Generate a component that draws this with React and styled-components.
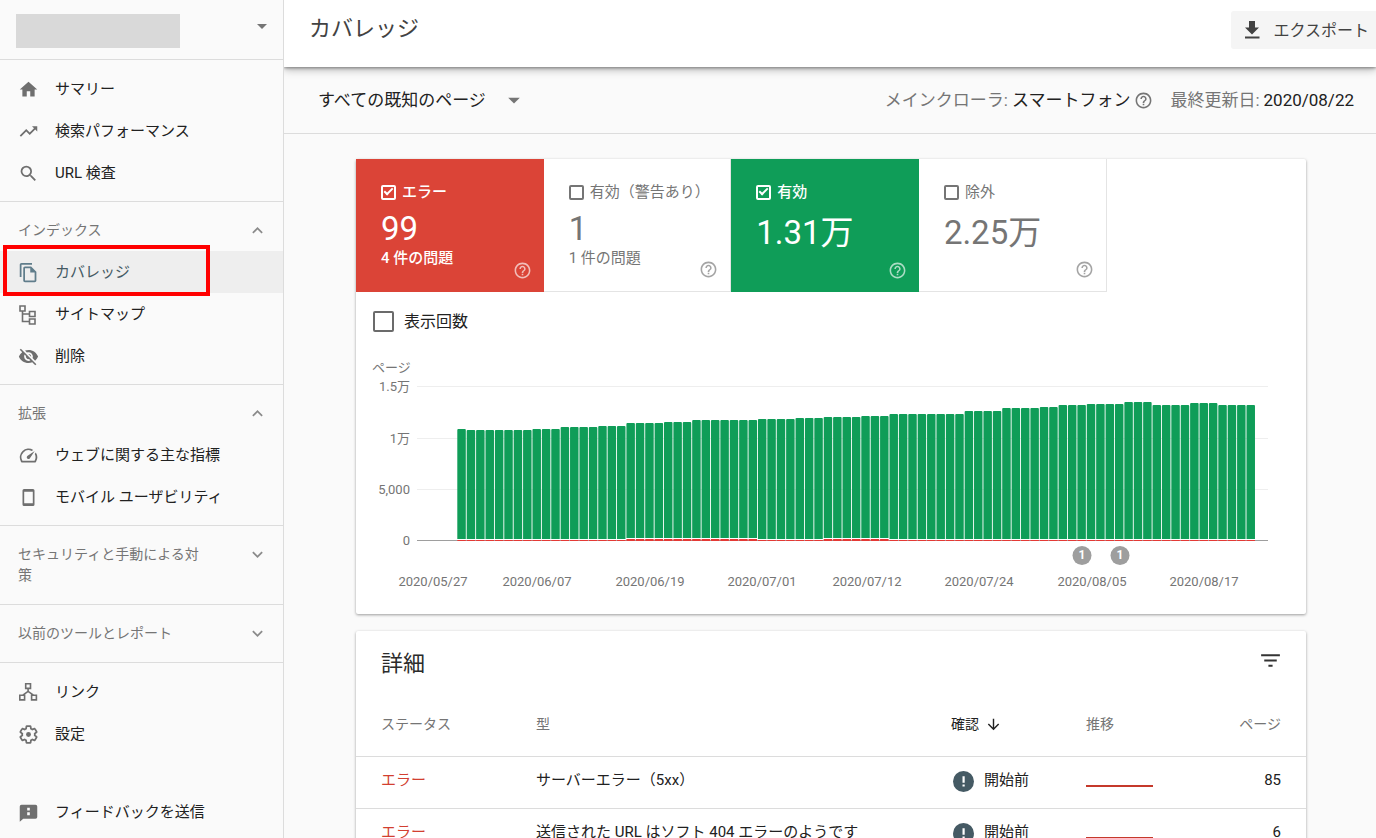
import React from 'react';
import styled, { createGlobalStyle } from 'styled-components';
import {
  MdHome,
  MdTrendingUp,
  MdSearch,
  MdOutlineFileCopy,
  MdVisibilityOff,
  MdOutlineSpeed,
  MdExpandLess,
  MdExpandMore,
  MdArrowDropDown,
  MdHelpOutline,
  MdFilterList,
  MdArrowDownward,
} from 'react-icons/md';

const GlobalStyle = createGlobalStyle`
  *, *::before, *::after { box-sizing: border-box; }
  body {
    margin: 0;
    background: #fafafa;
    color: #212121;
    font-family: Roboto, "Noto Sans CJK JP", sans-serif;
    font-size: 15px;
    line-height: 21px;
  }
  button, select, input { font: inherit; color: inherit; margin: 0; }
  svg { display: block; flex: none; }
`;

const line = '#dcdcdc';
const muted = '#757575';
const red = '#db4437';
const green = '#0f9d58';

/* ---------- shell ---------- */

const Shell = styled.div`
  display: flex;
  height: 100vh;
  overflow: hidden;
`;

const Sidebar = styled.aside`
  position: relative;
  z-index: 2;
  flex: none;
  width: 284px;
  background: #fafafa;
  border-right: 1px solid ${line};
  overflow-y: auto;
  scrollbar-width: none;
`;

const Main = styled.main`
  flex: 1;
  min-width: 0;
  display: flex;
  flex-direction: column;
`;

/* ---------- sidebar ---------- */

const PropertyPicker = styled.button`
  display: flex;
  align-items: flex-start;
  justify-content: space-between;
  width: 100%;
  height: 60px;
  padding: 14px 9px 0 16px;
  border: 0;
  border-bottom: 1px solid ${line};
  background: none;
  color: ${muted};
`;

const PropertyName = styled.span`
  width: 164px;
  height: 34px;
  background: #d9d9d9;
`;

const NavGroup = styled.section`
  padding-bottom: 7px;
  border-bottom: ${(p) => (p.$last ? '0' : `1px solid ${line}`)};
`;

const NavList = styled.ul`
  margin: 0;
  padding: ${(p) => (p.$top ? '8px 0 0' : '0')};
  list-style: none;
`;

const NavItem = styled.li`
  position: relative;
`;

const NavLink = styled.a`
  display: flex;
  align-items: center;
  gap: 16px;
  height: 42px;
  padding-left: 18px;
  color: ${(p) => (p.$active ? '#455a64' : '#212121')};
  background: ${(p) => (p.$active ? '#eeeeee' : 'transparent')};
  text-decoration: none;

  svg {
    color: ${(p) => (p.$active ? '#607d8b' : '#6f6f6f')};
  }
`;

const Callout = styled.span`
  position: absolute;
  z-index: 2;
  top: -6px;
  left: 3px;
  width: 207px;
  height: 51px;
  border: 4px solid #ff0000;
  pointer-events: none;
`;

const GroupToggle = styled.button`
  display: flex;
  justify-content: space-between;
  align-items: flex-start;
  width: 100%;
  padding: 18px 15px ${(p) => (p.$open ? '10px' : '18px')} 18px;
  border: 0;
  border-bottom: ${(p) => (p.$open ? '0' : `1px solid ${line}`)};
  background: none;
  color: ${muted};
  font-size: 14px;
  line-height: 21px;
  text-align: left;

  span {
    max-width: 184px;
  }

  svg {
    color: #8a8a8a;
  }
`;

const Feedback = styled.div`
  padding-top: 36px;
`;

/* ---------- header ---------- */

const TopBar = styled.header`
  position: relative;
  z-index: 1;
  flex: none;
  display: flex;
  justify-content: space-between;
  align-items: flex-start;
  height: 67px;
  padding: 11px 0 0 25px;
  background: #ffffff;
  box-shadow: 0 1px 3px rgba(0, 0, 0, 0.4), 0 3px 8px rgba(0, 0, 0, 0.25);
`;

const Title = styled.h1`
  margin: 0;
  font-size: 22px;
  font-weight: 400;
  line-height: 36px;
  color: #424242;
`;

const ExportButton = styled.button`
  display: flex;
  align-items: center;
  gap: 10px;
  height: 38px;
  padding: 0 7px 0 10px;
  border: 0;
  border-radius: 3px 0 0 3px;
  background: #f5f5f5;
  color: #424242;
  font-size: 16px;
  white-space: nowrap;
`;

const FilterBar = styled.div`
  flex: none;
  display: flex;
  justify-content: space-between;
  align-items: center;
  height: 67px;
  padding: 0 22px 0 34px;
  border-bottom: 1px solid ${line};
  font-size: 17px;
`;

const PageFilter = styled.label`
  display: grid;
  align-items: center;
  color: ${muted};

  select, svg {
    grid-area: 1 / 1;
  }

  svg {
    justify-self: end;
    pointer-events: none;
  }
`;

const PageSelect = styled.select`
  appearance: none;
  padding: 0 40px 0 0;
  border: 0;
  background: none;
  color: #212121;
  line-height: 24px;
`;

const Meta = styled.div`
  display: flex;
  align-items: center;
  gap: 17px;
`;

const MetaItem = styled.span`
  display: flex;
  align-items: center;
  gap: 4px;
  color: ${muted};
  white-space: nowrap;

  b {
    font-weight: 400;
    color: #212121;
  }
`;

const IconButton = styled.button`
  display: flex;
  padding: 0;
  border: 0;
  background: none;
  color: ${(p) => p.$color || muted};
`;

/* ---------- content ---------- */

const Content = styled.div`
  flex: 1;
  min-height: 0;
  display: flex;
  flex-direction: column;
  gap: 17px;
  padding: 25px 70px 0 72px;
  overflow-y: auto;
  scrollbar-width: none;
`;

const Card = styled.section`
  flex: none;
  background: #ffffff;
  border-radius: 2px;
  box-shadow: 0 1px 3px rgba(0, 0, 0, 0.38);
`;

const Scores = styled.div`
  display: grid;
  grid-template-columns: repeat(4, 1fr);
  width: 79%;
`;

const Score = styled.div`
  display: flex;
  flex-direction: column;
  position: relative;
  height: 133px;
  padding: 22px 0 0 25px;
  background: ${(p) => p.$fill || '#ffffff'};
  color: ${(p) => (p.$fill ? '#ffffff' : muted)};
  font-weight: ${(p) => (p.$fill ? 500 : 400)};
  border: solid #e4e4e4;
  border-width: ${(p) => (p.$fill ? '0' : '0 1px 1px 0')};
`;

const ScoreLabel = styled.label`
  display: flex;
  align-items: center;
  gap: 6px;
  line-height: 22px;
  white-space: nowrap;
`;

const ScoreCheck = styled.input`
  appearance: none;
  flex: none;
  display: grid;
  place-items: center;
  width: 15px;
  height: 15px;
  border: 2px solid currentColor;
  border-radius: 2px;

  &:checked::after {
    content: "";
    width: 5px;
    height: 9px;
    margin-top: -3px;
    border: solid currentColor;
    border-width: 0 2px 2px 0;
    transform: rotate(45deg);
  }
`;

const ScoreValue = styled.div`
  margin-top: 8px;
  font-size: 33px;
  font-weight: 400;
  line-height: ${(p) => (p.$tall ? '44px' : '36px')};
`;

const ScoreNote = styled.div`
  line-height: 22px;
`;

const ScoreHelp = styled.button`
  position: absolute;
  right: 12px;
  bottom: 12px;
  padding: 0;
  border: 0;
  background: none;
  opacity: 0.65;
`;

const Impressions = styled.label`
  display: flex;
  align-items: center;
  gap: 10px;
  padding: 19px 0 18px 17px;
  font-size: 16px;
`;

const BigCheck = styled.input`
  appearance: none;
  width: 21px;
  height: 21px;
  border: 2px solid #6b6b6b;
  border-radius: 2px;
`;

const Chart = styled.svg`
  width: 100%;
  height: auto;
  font-size: 13px;
  fill: ${muted};
`;

/* ---------- details ---------- */

const DetailsHead = styled.div`
  display: flex;
  justify-content: space-between;
  align-items: flex-start;
  padding: 17px 23px 13px 25px;

  h2 {
    margin: 0;
    font-size: 22px;
    font-weight: 400;
    line-height: 32px;
    color: #2b2b2b;
  }
`;

const Table = styled.table`
  width: 100%;
  table-layout: fixed;
  border-collapse: collapse;

  th, td {
    padding: 0;
    text-align: left;
    vertical-align: top;
    font-weight: 400;
    white-space: nowrap;
  }

  th:first-child, td:first-child { padding-left: 25px; }
  th:last-child, td:last-child { padding-right: 25px; text-align: right; }
`;

const HeadCell = styled.th`
  width: ${(p) => p.$width || 'auto'};
  height: 63px;
  font-size: 14px;
  line-height: 63px;
  color: ${(p) => (p.$sorted ? '#212121' : muted)};
`;

const Sort = styled.span`
  display: flex;
  align-items: center;
  gap: 6px;
`;

const Row = styled.tr`
  height: 52px;
  border-top: 1px solid ${line};
`;

const Cell = styled.td`
  height: 52px;
  line-height: 46px;
  color: ${(p) => (p.$error ? '#d23f31' : '#212121')};
`;

const State = styled.span`
  display: flex;
  align-items: center;
  gap: 8px;
`;

const Trend = styled.svg`
  margin-top: 28px;
`;

/* ---------- icons ---------- */

const SitemapIcon = () => (
  <svg width="21" height="21" viewBox="0 0 21 21" fill="none" stroke="currentColor" strokeWidth="1.6" aria-hidden="true">
    <path d="M2 2h5v5H2zM11.5 7.5h5.5v5h-5.5zM11.5 15h5.5v5h-5.5zM4.5 7v10.500h7M4.500 10h7" />
  </svg>
);

const PhoneIcon = () => (
  <svg width="21" height="21" viewBox="0 0 21 21" aria-hidden="true">
    <path fill="currentColor" fillRule="evenodd" d="M6 2h9a1.500 1.500 0 0 1 1.500 1.500v14a1.500 1.500 0 0 1-1.500 1.500H6a1.500 1.500 0 0 1-1.500-1.500v-14A1.500 1.500 0 0 1 6 2zm.2 2.700v11.600h8.600V4.700z" />
  </svg>
);

const LinksIcon = () => (
  <svg width="21" height="21" viewBox="0 0 21 21" fill="none" stroke="currentColor" strokeWidth="1.6" aria-hidden="true">
    <path d="M7.700 1.800h4.800v4.600H7.700zM1.800 13.300h4.800v4.600H1.800zM13.600 13.300h4.800v4.600h-4.800zM10.100 6.400v3L4.500 13.300M10.100 9.400l5.700 3.900" />
  </svg>
);

const GearIcon = () => (
  <svg width="21" height="21" viewBox="0 0 24 24" aria-hidden="true">
    <path
      fill="none"
      stroke="currentColor"
      strokeWidth="2"
      d="M19.140 12.940c.04-.3.06-.61.06-.94c0-.32-.02-.64-.07-.94l2.030-1.580c.18-.14.23-.41.12-.61l-1.920-3.320c-.12-.22-.37-.29-.59-.22l-2.390.96c-.5-.38-1.030-.7-1.620-.94L14.400 2.810c-.04-.24-.24-.41-.48-.41h-3.840c-.24 0-.43.17-.47.41L9.250 5.350C8.660 5.590 8.120 5.920 7.630 6.290L5.240 5.330c-.22-.08-.47 0-.59.22L2.740 8.870C2.620 9.080 2.660 9.340 2.860 9.480l2.030 1.580C4.840 11.360 4.800 11.690 4.800 12s.02.64.07.94l-2.030 1.580c-.18.14-.23.41-.12.61l1.920 3.320c.12.22.37.29.59.22l2.390-.96c.5.38 1.030.7 1.620.94l.36 2.540c.05.24.24.41.48.41h3.840c.24 0 .44-.17.47-.41l.36-2.540c.59-.24 1.130-.56 1.620-.94l2.390.96c.22.08.47 0 .59-.22l1.920-3.320c.12-.22.07-.47-.12-.61z"
    />
    <circle cx="12" cy="12" r="2.800" fill="currentColor" />
  </svg>
);

const FeedbackIcon = () => (
  <svg width="21" height="21" viewBox="0 0 24 24" aria-hidden="true">
    <path fill="currentColor" fillRule="evenodd" d="M4 3h16a2 2 0 0 1 2 2v12a2 2 0 0 1-2 2H6l-4 3.500V5a2 2 0 0 1 2-2zm6.500 3.500v3.300h3V6.500zm0 5.300v3.200h3v-3.200z" />
  </svg>
);

const DownloadIcon = () => (
  <svg width="22" height="22" viewBox="0 0 22 22" fill="currentColor" aria-hidden="true">
    <path d="M8 2h6v6.500h4L11 15.500 4 8.500h4zM4 17.500h14.500v2H4z" />
  </svg>
);

const AlertIcon = () => (
  <svg width="25" height="25" viewBox="0 0 25 25" aria-hidden="true">
    <circle cx="12.500" cy="13.500" r="10.500" fill="#455a64" />
    <path fill="#fff" d="M11.500 8.200h2.200v6.600h-2.200zM11.500 16.400h2.200v2.200h-2.200z" />
  </svg>
);

/* ---------- chart ---------- */

// Runs of equal daily totals: [number of days, top edge of the bars].
const runs = [
  [1, 79], [7, 80], [3, 79], [4, 77], [3, 76], [4, 73], [3, 72], [7, 70],
  [4, 69], [3, 68], [4, 67], [3, 66], [8, 64], [4, 61], [4, 58], [2, 57],
  [3, 55], [4, 54], [3, 52], [4, 55], [3, 53], [4, 55],
];
const tops = runs.flatMap(([n, y]) => Array(n).fill(y));
const hasMoreErrors = (i) => (i >= 18 && i < 32) || (i >= 39 && i < 46);

const scale = [
  [36.5, '1.5万'],
  [88.5, '1万'],
  [139.5, '5,000'],
  [190.5, '0'],
];

const dates = [
  [77, '2020/05/27'], [181, '2020/06/07'], [294, '2020/06/19'], [406, '2020/07/01'],
  [511, '2020/07/12'], [623, '2020/07/24'], [736, '2020/08/05'], [848, '2020/08/17'],
];

function CoverageChart() {
  return (
    <Chart viewBox="0 0 950 264" role="img" aria-label="ページ数の推移">
      <text x="16" y="22">ページ</text>
      {scale.map(([y, label], i) => (
        <g key={label}>
          <line x1="61" x2="912" y1={y} y2={y} stroke={i === 3 ? '#9e9e9e' : '#eeeeee'} />
          <text x="54" y={y + 4} textAnchor="end">{label}</text>
        </g>
      ))}
      {tops.map((top, i) => {
        const x = 101.3 + i * 9.395;
        const bottom = hasMoreErrors(i) ? 188 : 189;
        return (
          <g key={i}>
            <path fill={green} d={`M${x} ${bottom}V${top + 1}q0-1 1-1h6.500q1 0 1 1V${bottom}z`} />
            <rect fill="#fff" x={x} y={bottom} width="8.5" height="1" />
            <rect fill="#e53935" x={x} y={bottom + 1} width="8.5" height={190 - bottom} />
          </g>
        );
      })}
      {[726, 764].map((x) => (
        <g key={x}>
          <circle cx={x} cy="205.5" r="9.500" fill="#9e9e9e" />
          <text x={x} y="209" textAnchor="middle" fill="#fff" fontSize="12" fontWeight="700">1</text>
        </g>
      ))}
      {dates.map(([x, label]) => (
        <text key={label} x={x} y="236" textAnchor="middle">{label}</text>
      ))}
    </Chart>
  );
}

/* ---------- page ---------- */

function Nav({ items, top }) {
  return (
    <NavList $top={top}>
      {items.map(({ label, Icon, active }) => (
        <NavItem key={label}>
          <NavLink href="#" $active={active} aria-current={active ? 'page' : undefined}>
            <Icon size={21} />
            {label}
          </NavLink>
          {active && <Callout />}
        </NavItem>
      ))}
    </NavList>
  );
}

function Toggle({ label, open }) {
  return (
    <GroupToggle $open={open} aria-expanded={!!open}>
      <span>{label}</span>
      {open ? <MdExpandLess size={21} /> : <MdExpandMore size={21} />}
    </GroupToggle>
  );
}

const scores = [
  { label: 'エラー', value: '99', note: '4 件の問題', fill: red },
  { label: '有効（警告あり）', value: '1', note: '1 件の問題' },
  { label: '有効', value: '1.31万', fill: green },
  { label: '除外', value: '2.25万' },
];

const issues = [
  { type: 'サーバーエラー（5xx）', pages: 85 },
  { type: '送信された URL はソフト 404 エラーのようです', pages: 6 },
];

export default function App() {
  return (
    <>
      <GlobalStyle />
      <Shell>
        <Sidebar>
          <PropertyPicker aria-label="プロパティを選択">
            <PropertyName />
            <MdArrowDropDown size={24} />
          </PropertyPicker>
          <nav>
            <NavGroup>
              <Nav
                top
                items={[
                  { label: 'サマリー', Icon: MdHome },
                  { label: '検索パフォーマンス', Icon: MdTrendingUp },
                  { label: 'URL 検査', Icon: MdSearch },
                ]}
              />
            </NavGroup>
            <NavGroup>
              <Toggle label="インデックス" open />
              <Nav
                items={[
                  { label: 'カバレッジ', Icon: MdOutlineFileCopy, active: true },
                  { label: 'サイトマップ', Icon: SitemapIcon },
                  { label: '削除', Icon: MdVisibilityOff },
                ]}
              />
            </NavGroup>
            <NavGroup>
              <Toggle label="拡張" open />
              <Nav
                items={[
                  { label: 'ウェブに関する主な指標', Icon: MdOutlineSpeed },
                  { label: 'モバイル ユーザビリティ', Icon: PhoneIcon },
                ]}
              />
            </NavGroup>
            <Toggle label="セキュリティと手動による対策" />
            <Toggle label="以前のツールとレポート" />
            <NavGroup $last>
              <Nav
                top
                items={[
                  { label: 'リンク', Icon: LinksIcon },
                  { label: '設定', Icon: GearIcon },
                ]}
              />
              <Feedback>
                <Nav items={[{ label: 'フィードバックを送信', Icon: FeedbackIcon }]} />
              </Feedback>
            </NavGroup>
          </nav>
        </Sidebar>

        <Main>
          <TopBar>
            <Title>カバレッジ</Title>
            <ExportButton>
              <DownloadIcon />
              エクスポート
            </ExportButton>
          </TopBar>
          <FilterBar>
            <PageFilter>
              <PageSelect aria-label="表示するページ">
                <option>すべての既知のページ</option>
              </PageSelect>
              <MdArrowDropDown size={28} />
            </PageFilter>
            <Meta>
              <MetaItem>
                メインクローラ: <b>スマートフォン</b>
                <IconButton aria-label="クローラのヘルプ">
                  <MdHelpOutline size={19} />
                </IconButton>
              </MetaItem>
              <MetaItem>
                最終更新日: <b>2020/08/22</b>
              </MetaItem>
            </Meta>
          </FilterBar>

          <Content>
            <Card>
              <Scores>
                {scores.map((s) => (
                  <Score key={s.label} $fill={s.fill}>
                    <ScoreLabel>
                      <ScoreCheck type="checkbox" defaultChecked={!!s.fill} />
                      {s.label}
                    </ScoreLabel>
                    <ScoreValue $tall={!s.note}>{s.value}</ScoreValue>
                    {s.note && <ScoreNote>{s.note}</ScoreNote>}
                    <ScoreHelp aria-label={`${s.label}のヘルプ`}>
                      <MdHelpOutline size={19} />
                    </ScoreHelp>
                  </Score>
                ))}
              </Scores>
              <Impressions>
                <BigCheck type="checkbox" />
                表示回数
              </Impressions>
              <CoverageChart />
            </Card>

            <Card>
              <DetailsHead>
                <h2>詳細</h2>
                <IconButton aria-label="フィルタ" $color="#333333">
                  <MdFilterList size={25} />
                </IconButton>
              </DetailsHead>
              <Table>
                <thead>
                  <tr>
                    <HeadCell $width="180px">ステータス</HeadCell>
                    <HeadCell>型</HeadCell>
                    <HeadCell $width="135px" $sorted aria-sort="descending">
                      <Sort>
                        確認 <MdArrowDownward size={17} />
                      </Sort>
                    </HeadCell>
                    <HeadCell $width="110px">推移</HeadCell>
                    <HeadCell $width="110px">ページ</HeadCell>
                  </tr>
                </thead>
                <tbody>
                  {issues.map((issue) => (
                    <Row key={issue.type}>
                      <Cell $error>エラー</Cell>
                      <Cell>{issue.type}</Cell>
                      <Cell>
                        <State>
                          <AlertIcon />
                          開始前
                        </State>
                      </Cell>
                      <Cell>
                        <Trend width="67" height="2" aria-hidden="true">
                          <rect width="67" height="2" fill="#c5392b" />
                        </Trend>
                      </Cell>
                      <Cell>{issue.pages}</Cell>
                    </Row>
                  ))}
                </tbody>
              </Table>
            </Card>
          </Content>
        </Main>
      </Shell>
    </>
  );
}
